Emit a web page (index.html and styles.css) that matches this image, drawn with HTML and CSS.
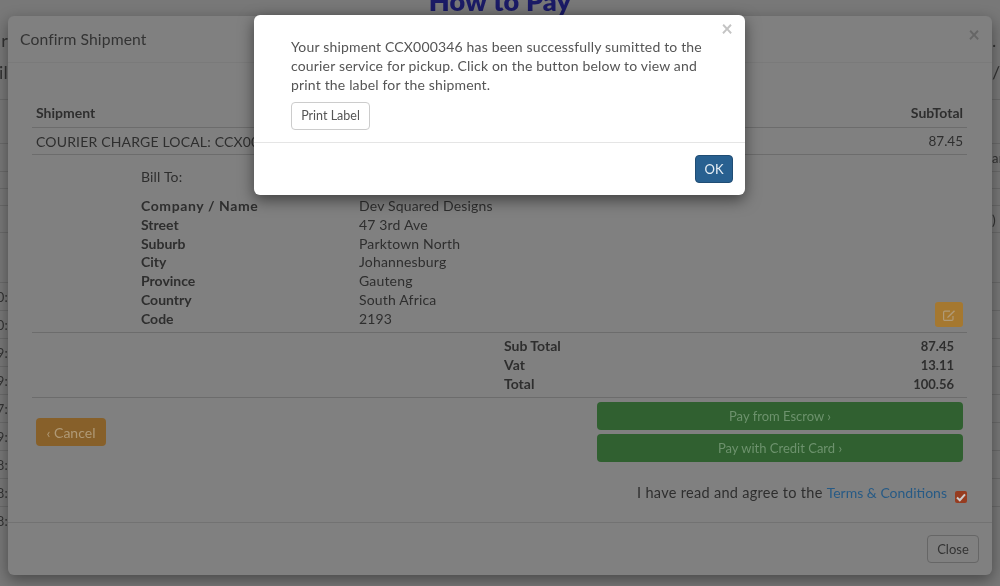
FILE: index.html
```html
<!DOCTYPE html>
<html lang="en">
<head>
<meta charset="utf-8">
<title>Confirm Shipment</title>
<link rel="stylesheet" href="styles.css">
</head>
<body>
<div class="screen">
<div class="page">
  <h1 class="page-title">How to Pay</h1>
  <div class="strip strip-big"><span class="frag-l">r</span><span class="frag-r">.</span></div>
  <div class="strip strip-big strip-gap"><span class="frag-l">il</span><span class="frag-r">/.</span></div>
  <div class="strip h18 line"></div>
  <div class="strip h44 line"></div>
  <div class="strip h28 line"><span></span><span class="frag-r small">ar</span></div>
  <div class="strip h17 line"></div>
  <div class="strip h17 line"></div>
  <div class="strip h27 line"><span></span><span class="frag-r">)</span></div>
  <div class="strip h50 line"></div>
  <div class="strip h28 line"><span class="frag-l small">0:</span></div>
  <div class="strip h28 line"><span class="frag-l small">0:</span></div>
  <div class="strip h28 line"><span class="frag-l small">9:</span></div>
  <div class="strip h28 line"><span class="frag-l small">9:</span></div>
  <div class="strip h28 line"><span class="frag-l small">7:</span></div>
  <div class="strip h28 line"><span class="frag-l small">9:</span></div>
  <div class="strip h28 line"><span class="frag-l small">8:</span></div>
  <div class="strip h28 line"><span class="frag-l small">8:</span></div>
  <div class="strip h28"><span class="frag-l small">8:</span></div>
</div>

<section class="modal modal-back">
  <header class="back-head">
    <h4>Confirm Shipment</h4>
    <span class="close close-back">×</span>
  </header>
  <div class="back-body">
    <div class="row row-head"><span>Shipment</span><span>SubTotal</span></div>
    <div class="row row-line"><span>COURIER CHARGE LOCAL: CCX000346</span><span class="amount">87.45</span></div>
    <div class="bill">
      <div class="bill-title">Bill To:</div>
      <div class="bill-grid">
        <b class="wide">Company / Name</b><span>Dev Squared Designs</span>
        <b>Street</b><span>47 3rd Ave</span>
        <b>Suburb</b><span>Parktown North</span>
        <b>City</b><span>Johannesburg</span>
        <b>Province</b><span>Gauteng</span>
        <b>Country</b><span>South Africa</span>
        <b>Code</b><span>2193</span>
      </div>
      <button class="btn btn-orange btn-edit" aria-label="Edit">
        <svg width="14" height="14" viewBox="0 0 14 14" fill="none" stroke="currentColor" stroke-width="1.2"><path d="M11 8v3.2a1.2 1.2 0 0 1-1.2 1.2H2.8a1.2 1.2 0 0 1-1.2-1.2V4.4a1.2 1.2 0 0 1 1.2-1.2H8"/><path d="M5.6 8.6 12 2.2l1 1-6.4 6.4-1.5.4z" fill="currentColor" stroke="none"/></svg>
      </button>
    </div>
    <div class="totals">
      <b>Sub Total</b><b class="num">87.45</b>
      <b>Vat</b><b class="num">13.11</b>
      <b>Total</b><b class="num">100.56</b>
    </div>
    <div class="actions">
      <button class="btn btn-orange btn-cancel">‹ Cancel</button>
      <div class="pay">
        <button class="btn btn-green">Pay from Escrow ›</button>
        <button class="btn btn-green">Pay with Credit Card ›</button>
      </div>
    </div>
    <div class="agree">
      <span>I have read and agree to the <a href="#">Terms &amp; Conditions</a></span>
      <span class="check"><svg width="10" height="9" viewBox="0 0 10 9" fill="none" stroke="currentColor" stroke-width="2"><path d="M1 4.5 3.8 7.2 9 1.4"/></svg></span>
    </div>
  </div>
  <footer class="back-foot"><button class="btn btn-close">Close</button></footer>
</section>

<section class="modal modal-front">
  <span class="close close-front">×</span>
  <div class="front-body">
    <p>Your shipment CCX000346 has been successfully sumitted to the courier service for pickup. Click on the button below to view and print the label for the shipment.</p>
    <button class="btn btn-print">Print Label</button>
  </div>
  <footer class="front-foot"><button class="btn btn-ok">OK</button></footer>
</section>
</div>
</body>
</html>
```
FILE: styles.css
```css
* { box-sizing: border-box; }
html, body { margin: 0; height: 100%; }
body { background: #787878; overflow: hidden; }
.screen {
  width: 1000px;
  height: 586px;
  overflow: hidden;
  background: #787878;
  font-family: "Lato", "Liberation Sans", sans-serif;
  font-size: 14px;
  letter-spacing: .17px;
  color: #2b2b2b;
  position: relative;
  filter: blur(.35px);
}
.page-title {
  margin: -15px 0 0;
  height: 45px;
  text-align: center;
  font-size: 27px;
  font-weight: 800;
  line-height: 32px;
  color: #1b1b66;
}
.strip { display: flex; justify-content: space-between; color: #333; }
.strip-big { height: 20px; font-size: 18px; line-height: 20px; margin-top: 0; }
.strip-gap { margin-top: 12px; }
.h17 { height: 17px; }
.h18 { height: 18px; }
.h27 { height: 27px; }
.h28 { height: 28px; }
.h44 { height: 44px; }
.h50 { height: 50px; }
.line { border-bottom: 1px solid #6a6a6a; }
.frag-l, .frag-r { display: flex; width: 8px; overflow: hidden; align-items: center; white-space: nowrap; }
.frag-l { justify-content: flex-end; }
.frag-r { justify-content: flex-start; }
.small { font-size: 13px; }

.modal { position: absolute; border-radius: 6px; }
.modal-back {
  left: 8px; top: 16px; width: 984px; height: 559px;
  background: #808080;
  box-shadow: 0 5px 15px rgba(0,0,0,.4);
  color: #2e2e2e;
  display: flex; flex-direction: column;
}
.back-head {
  height: 47px; padding: 13px 12px;
  border-bottom: 1px solid #7a7a7a;
  position: relative;
}
.back-head h4 { margin: 0; font-size: 15.7px; font-weight: 400; line-height: 20px; letter-spacing: .1px; color: #333; }
.close { position: absolute; font-size: 20px; font-weight: 700; line-height: 1; }
.close-back { right: 12px; top: 8px; color: #666; }
.close-front { right: 12px; top: 3px; color: #c4c4c4; }
.back-body { flex: 1; padding: 34px 25px 0 24px; }
.row { display: flex; justify-content: space-between; padding: 0 4px; border-bottom: 1px solid #6c6c6c; }
.row-head { height: 31px; align-items: center; font-weight: 700; letter-spacing: 0; }
.row-line { height: 27px; align-items: center; }
.amount { font-size: 13.5px; letter-spacing: 0; }
.bill { position: relative; padding-left: 109px; height: 178px; border-bottom: 1px solid #6c6c6c; }
.bill-title { padding-top: 13px; height: 42px; }
.bill-grid { display: grid; grid-template-columns: 218px 1fr; grid-auto-rows: 18.8px; line-height: 18.8px; }
.bill-grid b { letter-spacing: 0; }
.bill-grid .wide { letter-spacing: .6px; }
.btn {
  display: inline-flex; align-items: center; justify-content: center;
  font: inherit; letter-spacing: 0; border: 1px solid transparent; border-radius: 4px; padding: 0; cursor: pointer;
}
.btn-orange { background: #87602a; color: #b09a77; }
.btn-edit { position: absolute; right: 4px; top: 147px; width: 28px; height: 25px; border-radius: 3px; color: #b09a77; background: #a57830; }
.totals { display: grid; grid-template-columns: 1fr 108px; grid-auto-rows: 18.8px; line-height: 18.8px; padding: 4px 4px 0 472px; height: 65px; border-bottom: 1px solid #6c6c6c; letter-spacing: 0; }
.totals .num { text-align: right; padding-right: 9px; font-size: 13px; }
.actions { display: flex; justify-content: space-between; padding: 4px 4px 0; }
.btn-cancel { width: 70px; height: 28px; margin-top: 16px; }
.pay { width: 366px; display: flex; flex-direction: column; gap: 4px; }
.btn-green { height: 28px; background: #306030; color: #6d926d; font-size: 13px; }
.agree { display: flex; justify-content: flex-end; gap: 8px; padding-top: 22px; font-size: 14.5px; letter-spacing: .3px; }
.agree a { color: #275a85; text-decoration: none; font-size: 14px; letter-spacing: 0; }
.check { width: 12px; height: 12px; margin-top: 7px; background: #963c20; border-radius: 2px; color: #ccc; display: flex; align-items: center; justify-content: center; }
.back-foot { height: 53px; border-top: 1px solid #727272; display: flex; justify-content: flex-end; align-items: center; padding: 0 13px; }
.btn-close { width: 52px; height: 28px; background: transparent; border-color: #666; color: #333; font-size: 13px; }
.modal-front {
  left: 254px; top: 15px; width: 491px; height: 180px;
  background: #fff;
  box-shadow: 0 5px 15px rgba(0,0,0,.5);
  color: #555;
  display: flex; flex-direction: column;
}
.front-body { height: 128px; padding: 22px 37px 0; border-bottom: 1px solid #e5e5e5; }
.front-body p { margin: 0 0 8px; line-height: 19px; }
.btn-print { width: 79px; height: 28px; padding-bottom: 2px; background: #fff; border-color: #ccc; color: #555; font-size: 12.5px; }
.front-foot { flex: 1; display: flex; justify-content: flex-end; align-items: center; padding: 0 12px; }
.btn-ok { width: 38px; height: 28px; background: #286090; border-color: #204d74; color: #e6eef5; font-size: 13px; }
```
